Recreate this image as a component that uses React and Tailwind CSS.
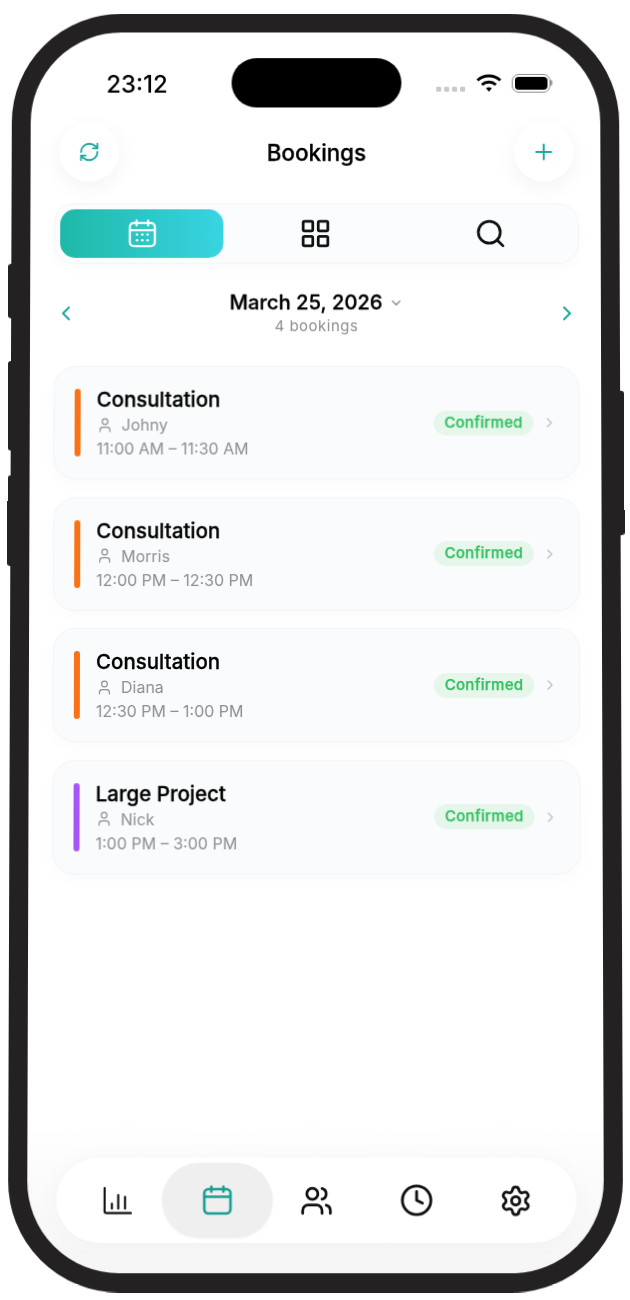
import React from "react";
import { ChevronDown, ChevronLeft, ChevronRight, Clock, LayoutGrid, Plus, RefreshCw, Search, Settings, User, Users } from "lucide-react";

const bookings = [
  { title: "Consultation", name: "Johny", time: "11:00 AM – 11:30 AM", bar: "bg-[#f97316]" },
  { title: "Consultation", name: "Morris", time: "12:00 PM – 12:30 PM", bar: "bg-[#f97316]" },
  { title: "Consultation", name: "Diana", time: "12:30 PM – 1:00 PM", bar: "bg-[#f97316]" },
  { title: "Large Project", name: "Nick", time: "1:00 PM – 3:00 PM", bar: "bg-[#a855f7]" },
];

function CalendarIcon({ className, dots, strokeWidth = 2.2 }) {
  return (
    <svg viewBox="0 0 30 30" fill="none" stroke="currentColor" strokeWidth={strokeWidth} strokeLinecap="round" className={className}>
      <rect x="2" y="4" width="26" height="24" rx="4" />
      <path d="M2 11.5h26M9 1.5v5M21 1.5v5" />
      {dots && (
        <g fill="currentColor" stroke="none">
          <circle cx="9.5" cy="16" r="1.3" />
          <circle cx="15" cy="16" r="1.3" />
          <circle cx="20.5" cy="16" r="1.3" />
          <circle cx="9.5" cy="22" r="1.3" />
          <circle cx="15" cy="22" r="1.3" />
          <circle cx="20.5" cy="22" r="1.3" />
        </g>
      )}
    </svg>
  );
}

function ChartIcon({ className }) {
  return (
    <svg viewBox="0 0 30 30" fill="none" stroke="currentColor" strokeWidth="2.2" strokeLinecap="round" className={className}>
      <path d="M2 2v23.5a2 2 0 0 0 2 2h25M9.5 18v5M16 9v14M23 11v12" />
    </svg>
  );
}

function WifiIcon() {
  return (
    <svg viewBox="0 0 26 19" className="h-[19px] w-[26px]" fill="none" stroke="black" strokeWidth="3">
      <path d="M1.5 6.5C8 .5 18 .5 24.5 6.5" />
      <path d="M6 11c4-3.6 10-3.6 14 0" />
      <path d="M10 14.6 13 18l3-3.4c-1.8-1.4-4.2-1.4-6 0Z" fill="black" stroke="none" />
    </svg>
  );
}

function StatusBar() {
  return (
    <div className="mt-[26px] flex h-[50px] items-center">
      <span className="ml-[76px] mt-[3px] w-[126px] text-[24px] font-medium text-black">23:12</span>
      <div className="h-[50px] w-[171px] rounded-[25px] bg-black" />
      <div className="ml-[35px] mt-[12px] flex gap-[3px]">
        <span className="size-[5px] rounded-[1px] bg-[#c9c9c9]" />
        <span className="size-[5px] rounded-[1px] bg-[#c9c9c9]" />
        <span className="size-[5px] rounded-[1px] bg-[#c9c9c9]" />
        <span className="size-[5px] rounded-[1px] bg-[#c9c9c9]" />
      </div>
      <div className="ml-[11px]">
        <WifiIcon />
      </div>
      <div className="ml-[10px] flex items-center">
        <div className="h-[19px] w-[39px] rounded-[7px] border-[1.5px] border-[#8a8a8a] p-[2px]">
          <div className="h-full w-full rounded-[4px] bg-black" />
        </div>
        <div className="h-[6px] w-[2px] rounded-r-full bg-[#9a9a9a]" />
      </div>
    </div>
  );
}

function Header() {
  return (
    <div className="mt-[15px] flex items-center justify-between pl-[29px] pr-[27px]">
      <button className="flex size-[60px] items-center justify-center rounded-full bg-white shadow-[0_6px_22px_rgba(0,0,0,0.05)]">
        <RefreshCw size={22} strokeWidth={2} className="text-[#1fa89c]" />
      </button>
      <h1 className="mt-[2px] text-[22.5px] font-medium text-black [-webkit-text-stroke:0.3px_black]">Bookings</h1>
      <button className="flex size-[60px] items-center justify-center rounded-full bg-white shadow-[0_6px_22px_rgba(0,0,0,0.05)]">
        <Plus size={26} strokeWidth={1.8} className="text-[#1fa89c]" />
      </button>
    </div>
  );
}

function Tabs() {
  return (
    <div className="ml-[24px] mr-[22px] mt-[22px] flex h-[61px] items-center rounded-[20px] border border-[#f3f4f6] bg-[#fbfcfd] pl-[5px] shadow-[0_4px_14px_rgba(0,0,0,0.02)]">
      <div className="flex h-[49px] w-[164px] items-center justify-center rounded-[15px] bg-linear-to-r from-[#1eb8a8] to-[#38d4e2] text-white">
        <CalendarIcon dots strokeWidth={2.4} className="size-[29px]" />
      </div>
      <div className="flex w-[185px] justify-center">
        <LayoutGrid size={33} strokeWidth={2} className="text-[#111]" />
      </div>
      <div className="flex w-[166px] justify-center">
        <Search size={33} strokeWidth={2} className="text-[#111]" />
      </div>
    </div>
  );
}

function DateRow() {
  return (
    <div className="mt-[25px] flex items-center justify-between pl-[24px] pr-[22px]">
      <ChevronLeft size={24} strokeWidth={2} className="mt-[2px] text-[#1fa89c]" />
      <div className="flex flex-col items-center">
        <div className="flex h-[28px] items-center gap-[6px]">
          <span className="text-[20.3px] font-medium text-black [-webkit-text-stroke:0.3px_black]">March 25, 2026</span>
          <ChevronDown size={15} strokeWidth={2} className="text-[#777]" />
        </div>
        <span className="h-[20px] text-[15px] leading-[20px] tracking-[0.5px] text-[#8e8e93]">4 bookings</span>
      </div>
      <ChevronRight size={24} strokeWidth={2} className="mt-[2px] text-[#1fa89c]" />
    </div>
  );
}

function BookingCard({ booking }) {
  return (
    <div className="flex h-[114px] items-center rounded-[22px] border border-[#f3f4f6] bg-[#fafbfc] pl-[20px] pr-[21px] shadow-[0_6px_18px_rgba(0,0,0,0.02)]">
      <div className={`h-[68px] w-[6px] rounded-full ${booking.bar}`} />
      <div className="ml-[16px] mt-[2px] flex-1">
        <div className="text-[20.5px] font-medium leading-[26px] text-black [-webkit-text-stroke:0.3px_black]">{booking.title}</div>
        <div className="flex h-[24px] items-center gap-[8px] text-[16px] text-[#8e8e93]">
          <User size={17} strokeWidth={1.7} />
          {booking.name}
        </div>
        <div className="text-[16px] leading-[24px] text-[#8e8e93]">{booking.time}</div>
      </div>
      <span className="flex h-[25px] w-[100px] items-center justify-center rounded-full bg-[#e6f6ea] text-[15px] font-medium tracking-[0.3px] text-[#2fbf5f] [-webkit-text-stroke:0.25px_#2fbf5f]">
        Confirmed
      </span>
      <ChevronRight size={16} strokeWidth={1.8} className="ml-[8px] text-[#bdbdbd]" />
    </div>
  );
}

function BottomNav() {
  return (
    <div className="mb-[30px] ml-[29px] mt-auto flex h-[84px] w-[517px] items-center justify-center rounded-[42px] bg-white shadow-[0_0_24px_rgba(0,0,0,0.03)]">
      <div className="flex w-[99px] justify-center">
        <ChartIcon className="size-[29px] text-[#111]" />
      </div>
      <div className="flex w-[99px] justify-center">
        <div className="flex h-[74px] w-[110px] shrink-0 items-center justify-center rounded-[37px] bg-[#efefef] shadow-[0_1px_3px_rgba(0,0,0,0.05)]">
          <CalendarIcon strokeWidth={2.6} className="size-[30px] text-[#1a9e93]" />
        </div>
      </div>
      <div className="flex w-[99px] justify-center">
        <Users size={33} strokeWidth={2} className="text-[#111]" />
      </div>
      <div className="flex w-[99px] justify-center">
        <Clock size={34} strokeWidth={2} className="text-[#111]" />
      </div>
      <div className="flex w-[99px] justify-center">
        <Settings size={33} strokeWidth={2} className="text-[#111]" />
      </div>
    </div>
  );
}

export default function App() {
  return (
    <div className="h-[1300px] w-[630px] overflow-hidden bg-white pl-[10px] pt-[9px] font-['Inter',sans-serif]">
      <div className="relative h-[1279px] w-[611px] [transform:perspective(2000px)_rotateX(1.3deg)]">
        {/* side buttons */}
        <div className="absolute -left-[3px] top-[253px] h-[55px] w-[6px] rounded-l-[3px] bg-[#232122]" />
        <div className="absolute -left-[3px] top-[351px] h-[90px] w-[6px] rounded-l-[3px] bg-[#232122]" />
        <div className="absolute -left-[3px] top-[466px] h-[91px] w-[6px] rounded-l-[3px] bg-[#232122]" />
        <div className="absolute -right-[4px] top-[381px] h-[145px] w-[6px] rounded-r-[3px] bg-[#232122]" />

        <div className="relative flex h-full flex-col overflow-hidden rounded-[110px] border-[19px] border-[#232122] bg-linear-to-b from-white from-88% to-[#f5f5f5]">
          <StatusBar />
          <Header />
          <Tabs />
          <DateRow />
          <div className="ml-[24px] mr-[22px] mt-[30px] flex flex-col gap-[17.5px]">
            {bookings.map((booking) => (
              <BookingCard key={booking.name} booking={booking} />
            ))}
          </div>
          <BottomNav />
        </div>
      </div>
    </div>
  );
}
